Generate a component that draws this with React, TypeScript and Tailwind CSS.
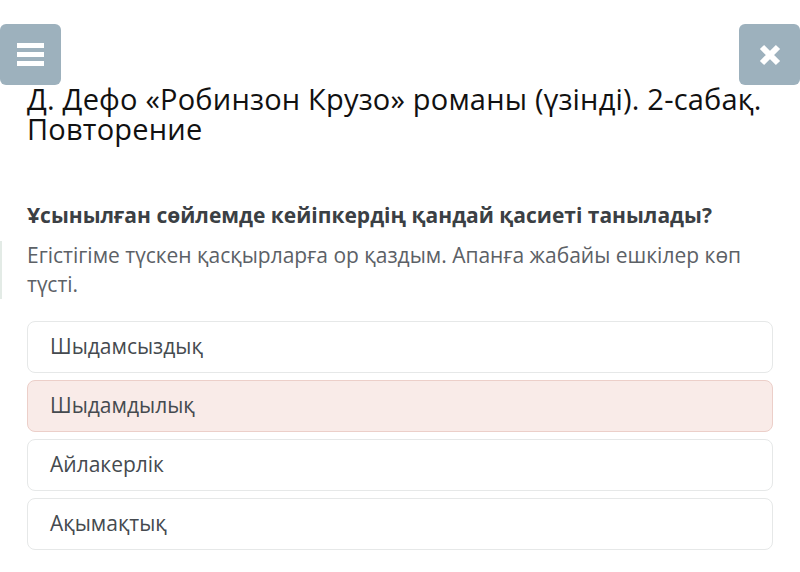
import React from 'react';

const options = ['Шыдамсыздық', 'Шыдамдылық', 'Айлакерлік', 'Ақымақтық'];

export default function App() {
  return (
    <div className="relative w-[800px] h-[572px] bg-white overflow-hidden" style={{ fontFamily: '"Open Sans", "Noto Sans", sans-serif' }}>
      {/* Top buttons */}
      <button className="absolute left-0 top-[24px] w-[61px] h-[61px] rounded-md bg-[#9db1bd] flex flex-col items-center justify-center gap-[4px]">
        <span className="block w-[27px] h-[5px] bg-white" />
        <span className="block w-[27px] h-[5px] bg-white" />
        <span className="block w-[27px] h-[5px] bg-white" />
      </button>
      <button className="absolute right-0 top-[24px] w-[61px] h-[61px] rounded-md bg-[#9db1bd] flex items-center justify-center">
        <svg width="24" height="24" viewBox="0 0 24 24">
          <path d="M4 4 L20 20 M20 4 L4 20" stroke="white" strokeWidth="6" strokeLinecap="butt" />
        </svg>
      </button>

      <div className="pt-[84px] px-[27px]">
        <h1 className="text-[29px] leading-[30px] text-[#111] tracking-[0.2px]">
          Д. Дефо «Робинзон Крузо» романы (үзінді). 2-сабақ. Повторение
        </h1>

        <p className="mt-[58px] text-[21px] leading-[26px] font-bold text-[#3b4044]">
          Ұсынылған сөйлемде кейіпкердің қандай қасиеті танылады?
        </p>
      </div>

      <div className="mt-[13px] border-l-[2px] border-[#e3ebe6] pl-[25px] pr-[30px]">
        <p className="text-[21px] leading-[29px] text-[#5c6166]">
          Егістігіме түскен қасқырларға ор қаздым. Апанға жабайы ешкілер көп түсті.
        </p>
      </div>

      <div className="mt-[22px] px-[27px] flex flex-col gap-[7px]">
        {options.map((o, i) => (
          <div
            key={o}
            className={
              i === 1
                ? 'h-[52px] rounded-lg border border-[#eccfc9] bg-[#f9ebe8] flex items-center px-[22px]'
                : 'h-[52px] rounded-lg border border-[#e6e8e8] bg-white flex items-center px-[22px]'
            }
          >
            <span className="text-[21px] text-[#454a4f]">{o}</span>
          </div>
        ))}
      </div>
    </div>
  );
}
